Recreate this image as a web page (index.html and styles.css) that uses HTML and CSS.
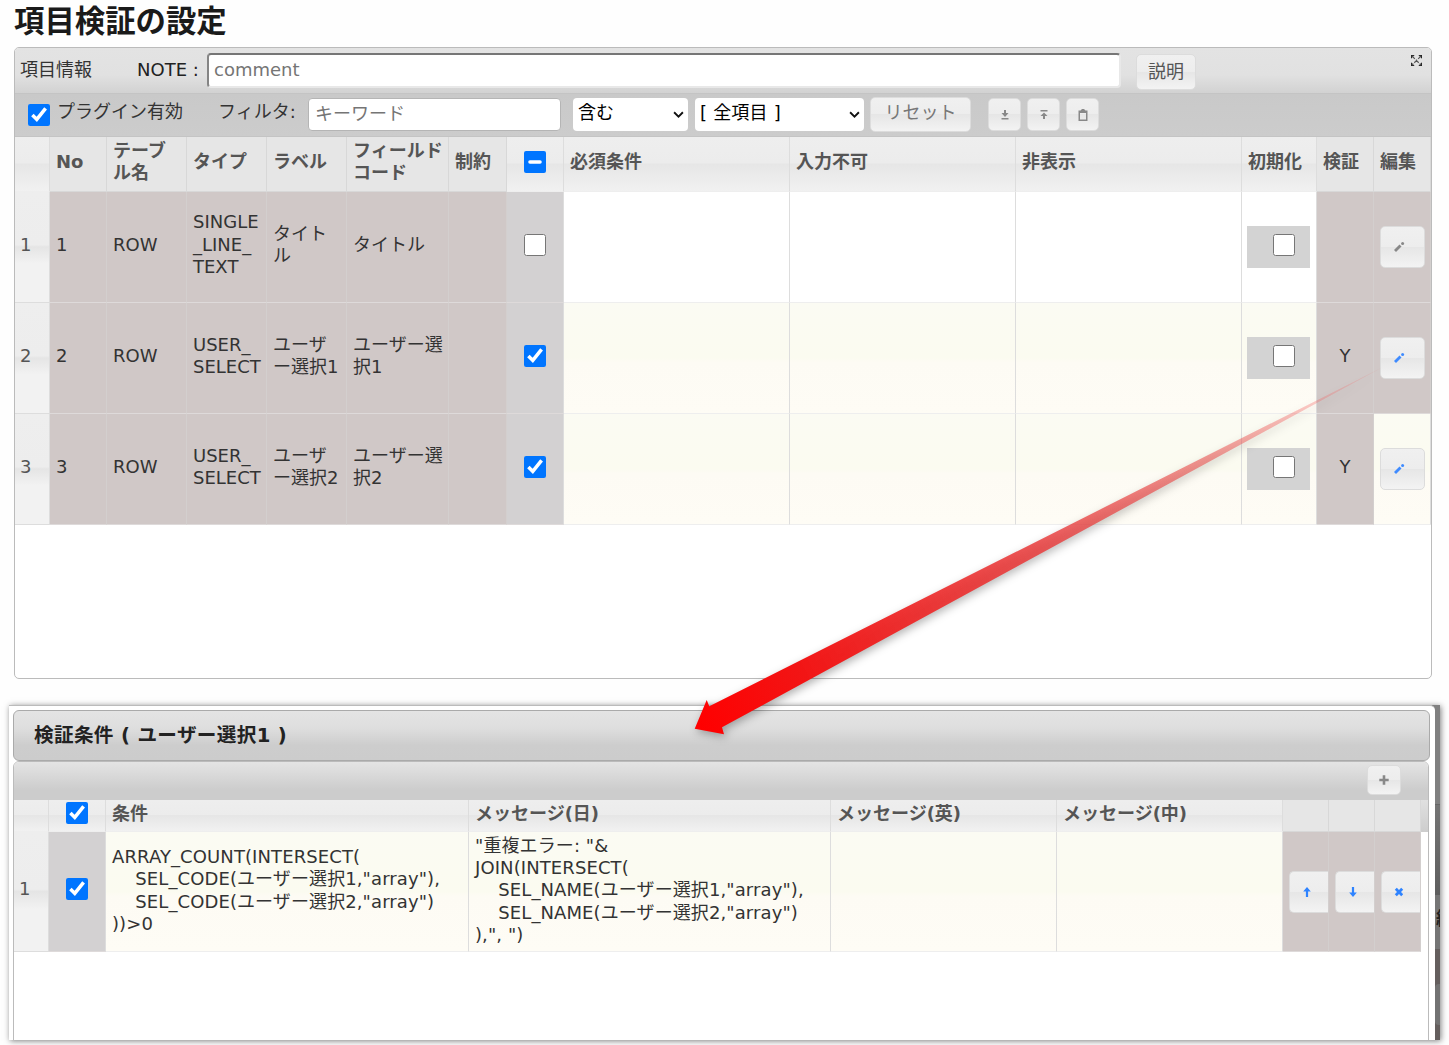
FILE: index.html
```html
<!DOCTYPE html>
<html lang="ja">

<head>
    <meta charset="UTF-8">
    <title>項目検証の設定</title>
    <link rel="stylesheet" href="styles.css">
</head>

<body>
    <h1>項目検証の設定</h1>

    <!-- Field list -->
    <section class="grid-panel">
        <div class="title-bar">
            <span class="title-label">項目情報</span>
            <label class="note-label" for="note">NOTE :</label>
            <input type="text" id="note" class="note-input" placeholder="comment">
            <button class="btn help-btn">説明</button>
            <svg class="expand-icon" viewBox="0 0 12 12">
                <path d="M0 0h4L0 4zM12 0v4L8 0zM0 12V8l4 4zM12 12H8l4-4z" />
                <path class="cross" d="M1 1l10 10M11 1L1 11" />
            </svg>
        </div>
        <div class="toolbar">
            <input type="checkbox" id="enabled" checked>
            <label class="enabled-label" for="enabled">プラグイン有効</label>
            <label class="filter-label" for="keyword">フィルタ:</label>
            <input type="text" id="keyword" class="keyword-input" placeholder="キーワード">
            <div class="select select-cond">含む<svg viewBox="0 0 10 7"><path d="M1 1l4 4 4-4" /></svg></div>
            <div class="select select-field">[ 全項目 ]<svg viewBox="0 0 10 7"><path d="M1 1l4 4 4-4" /></svg></div>
            <button class="btn reset-btn">リセット</button>
            <button class="btn tool-btn"><svg viewBox="0 0 10 12"><path d="M4 1h2v3h2.500L5 8 1.500 4H4zM1.500 9h7v1.500h-7z" /></svg></button>
            <button class="btn tool-btn"><svg viewBox="0 0 10 12"><path d="M1.500 1h7v1.500h-7zM5 3.500l3.500 3.500H6v3H4V7H1.500z" /></svg></button>
            <button class="btn tool-btn"><svg viewBox="0 0 10 12"><path fill-rule="evenodd" d="M2.500 1.500L4 0h2l1.500 1.500h2V12h-9V1.500zM2 4v6.500h6V4z" /></svg></button>
        </div>
        <table class="fields">
            <colgroup>
                <col style="width: 35px"><col style="width: 57px"><col style="width: 80px"><col style="width: 80px">
                <col style="width: 80px"><col style="width: 102px"><col style="width: 58px"><col style="width: 57px">
                <col style="width: 226px"><col style="width: 226px"><col style="width: 226px"><col style="width: 75px">
                <col style="width: 57px"><col style="width: 57px">
            </colgroup>
            <thead>
                <tr>
                    <th></th>
                    <th class="fixed">No</th>
                    <th class="fixed">テーブ<br>ル名</th>
                    <th class="fixed">タイプ</th>
                    <th class="fixed">ラベル</th>
                    <th class="fixed">フィールド<br>コード</th>
                    <th class="fixed">制約</th>
                    <th class="check"><input type="checkbox" id="checkAll"></th>
                    <th>必須条件</th>
                    <th>入力不可</th>
                    <th>非表示</th>
                    <th>初期化</th>
                    <th class="fixed">検証</th>
                    <th class="fixed">編集</th>
                </tr>
            </thead>
            <tbody>
                <tr>
                    <td class="num">1</td>
                    <td class="ro">1</td>
                    <td class="ro">ROW</td>
                    <td class="ro">SINGLE<br>_LINE_<br>TEXT</td>
                    <td class="ro">タイト<br>ル</td>
                    <td class="ro">タイトル</td>
                    <td class="ro"></td>
                    <td class="check"><input type="checkbox"></td>
                    <td></td>
                    <td></td>
                    <td></td>
                    <td class="init"><div><input type="checkbox"></div></td>
                    <td class="ro center"></td>
                    <td class="ro edit"><button class="btn edit-btn"><svg viewBox="0 0 12 12"><path class="shaft" d="M2 10l5.500-5.500" /><path class="tip" d="M9.600 2.400h.01" /></svg></button></td>
                </tr>
                <tr class="active">
                    <td class="num">2</td>
                    <td class="ro">2</td>
                    <td class="ro">ROW</td>
                    <td class="ro">USER_<br>SELECT</td>
                    <td class="ro">ユーザ<br>ー選択1</td>
                    <td class="ro">ユーザー選<br>択1</td>
                    <td class="ro"></td>
                    <td class="check"><input type="checkbox" checked></td>
                    <td></td>
                    <td></td>
                    <td></td>
                    <td class="init"><div><input type="checkbox"></div></td>
                    <td class="ro center">Y</td>
                    <td class="ro edit"><button class="btn edit-btn"><svg viewBox="0 0 12 12"><path class="shaft" d="M2 10l5.500-5.500" /><path class="tip" d="M9.600 2.400h.01" /></svg></button></td>
                </tr>
                <tr class="active">
                    <td class="num">3</td>
                    <td class="ro">3</td>
                    <td class="ro">ROW</td>
                    <td class="ro">USER_<br>SELECT</td>
                    <td class="ro">ユーザ<br>ー選択2</td>
                    <td class="ro">ユーザー選<br>択2</td>
                    <td class="ro"></td>
                    <td class="check"><input type="checkbox" checked></td>
                    <td></td>
                    <td></td>
                    <td></td>
                    <td class="init"><div><input type="checkbox"></div></td>
                    <td class="ro center">Y</td>
                    <td class="edit"><button class="btn edit-btn"><svg viewBox="0 0 12 12"><path class="shaft" d="M2 10l5.500-5.500" /><path class="tip" d="M9.600 2.400h.01" /></svg></button></td>
                </tr>
            </tbody>
        </table>
    </section>

    <!-- Validation dialog -->
    <section class="dialog-wrap">
        <div class="dialog">
            <h2>検証条件 ( ユーザー選択1 )</h2>
            <div class="rules-panel">
                <div class="rules-toolbar">
                    <button class="btn add-btn"><svg viewBox="0 0 10 10"><path d="M3.700 .3h2.600v3.400h3.400v2.600H6.300v3.400H3.700V6.300H.3V3.700h3.400z" /></svg></button>
                </div>
                <div class="rules-body">
                    <table class="rules">
                        <colgroup>
                            <col style="width: 35px"><col style="width: 57px"><col style="width: 363px"><col style="width: 362px">
                            <col style="width: 226px"><col style="width: 226px"><col style="width: 46px"><col style="width: 46px">
                            <col style="width: 46px">
                        </colgroup>
                        <thead>
                            <tr>
                                <th></th>
                                <th class="check"><input type="checkbox" checked></th>
                                <th>条件</th>
                                <th>メッセージ(日)</th>
                                <th>メッセージ(英)</th>
                                <th>メッセージ(中)</th>
                                <th class="fixed"></th>
                                <th class="fixed"></th>
                                <th class="fixed"></th>
                            </tr>
                        </thead>
                        <tbody>
                            <tr class="active">
                                <td class="num">1</td>
                                <td class="check"><input type="checkbox" checked></td>
                                <td class="formula">ARRAY_COUNT(INTERSECT(
    SEL_CODE(ユーザー選択1,"array"),
    SEL_CODE(ユーザー選択2,"array")
))&gt;0</td>
                                <td class="formula">"重複エラー: "&amp;
JOIN(INTERSECT(
    SEL_NAME(ユーザー選択1,"array"),
    SEL_NAME(ユーザー選択2,"array")
),", ")</td>
                                <td></td>
                                <td></td>
                                <td class="ro op"><button class="btn op-btn"><svg viewBox="0 0 10 10"><path d="M5 0l3.800 4.500H6.100V10H3.900V4.500H1.200z" /></svg></button></td>
                                <td class="ro op"><button class="btn op-btn"><svg viewBox="0 0 10 10"><path d="M5 10L1.200 5.500h2.700V0h2.200v5.500h2.700z" /></svg></button></td>
                                <td class="ro op"><button class="btn op-btn"><svg viewBox="0 0 10 10"><path d="M.8 2.800L2.800 .8 5 3 7.200 .8l2 2L7 5l2.200 2.200-2 2L5 7 2.800 9.200l-2-2L3 5z" /></svg></button></td>
                            </tr>
                        </tbody>
                    </table>
                </div>
            </div>
        </div>
        <div class="backdrop">
            <div class="bd-top"></div>
            <div class="bd-bar"></div>
            <div class="bd-head">編</div>
            <div class="bd-cell"><i></i></div>
        </div>
    </section>

    <!-- Arrow from the edit button to the dialog -->
    <svg class="arrow" viewBox="0 0 1449 1045">
        <defs>
            <linearGradient id="fade" gradientUnits="userSpaceOnUse" x1="700" y1="726" x2="1383" y2="367">
                <stop offset="0" stop-color="#ff0000" />
                <stop offset="0.15" stop-color="#f21515" />
                <stop offset="0.5" stop-color="#e93c3c" stop-opacity="0.85" />
                <stop offset="0.75" stop-color="#ea4a48" stop-opacity="0.55" />
                <stop offset="1" stop-color="#ff5050" stop-opacity="0.1" />
            </linearGradient>
        </defs>
        <path fill="url(#fade)" d="M694.700 728.700L706.700 700l2.600 6.300L1383 367 722 727.300l2 7z" />
    </svg>

    <script>
        document.getElementById("checkAll").indeterminate = true;
    </script>
</body>

</html>
```
FILE: styles.css
```css
* {
    box-sizing: border-box;
}

body {
    width: 1449px;
    height: 1045px;
    margin: 0;
    padding: 0 0 0 14px;
    overflow: hidden;
    position: relative;
    background-color: #fefefe;
    color: #333;
    font-family: "DejaVu Sans", "Noto Sans CJK JP", sans-serif;
    font-size: 18px;
    line-height: 22.500px;
}

h1 {
    height: 47px;
    margin: 0;
    color: #1a1a1a;
    font-size: 30.400px;
    line-height: 43px;
}

input,
button {
    margin: 0;
    font: inherit;
}

input[type="checkbox"] {
    display: block;
    width: 22px;
    height: 22px;
    flex: none;
    accent-color: #0075ff;
}

input[type="text"] {
    border-radius: 4px;
    background-color: #fff;
    padding: 0 6px 3px;
}

::placeholder {
    color: #757575;
}

/* Buttons */
.btn {
    display: flex;
    align-items: center;
    justify-content: center;
    flex: none;
    padding: 0;
    border: 1px solid #dcdcdc;
    border-radius: 5px;
    background: linear-gradient(#f0f0f0, #ededed 50%, #e6e6e6 50%, #f3f3f3);
    color: #555;
}

.btn svg {
    fill: #888;
}

/* Field list */
.grid-panel {
    width: 1418px;
    height: 632px;
    border: 1px solid #bbb;
    border-radius: 5px;
    background-color: #fff;
    overflow: hidden;
}

.title-bar {
    display: flex;
    height: 46px;
    padding: 5px 9px 0 5px;
    background: linear-gradient(#e3e3e3, #e1e1e1 60%, #d2d2d2);
    border-bottom: 1px solid #c4c4c4;
}

.title-label {
    width: 117px;
    line-height: 34px;
}

.note-label {
    width: 70px;
    line-height: 34px;
    white-space: nowrap;
    color: #222;
}

.note-input {
    width: 914px;
    height: 35px;
    padding-left: 5px !important;
    border: 2px solid;
    border-color: #767676 #e8e8e8 #e8e8e8 #858585;
}

.help-btn {
    width: 60px;
    height: 36px;
    margin: 1px 0 0 15px;
}

.expand-icon {
    width: 11px;
    height: 11px;
    margin: 2px 0 0 auto;
    fill: #222;
}

.expand-icon .cross {
    stroke: #555;
    stroke-width: 1.300;
    stroke-dasharray: 4.500 1.500;
}

.toolbar {
    display: flex;
    align-items: center;
    height: 43px;
    padding: 0 0 1px 13px;
    background: linear-gradient(#c9c9c9, #ccc);
    border-bottom: 1px solid #c4c4c4;
}

.enabled-label {
    width: 161px;
    margin: -4px 0 0 7px;
}

.filter-label {
    width: 90px;
    margin-top: -4px;
}

.keyword-input {
    width: 253px;
    height: 33px;
    border: 1px solid #b5b5b5;
}

.select {
    display: flex;
    align-items: center;
    justify-content: space-between;
    height: 33px;
    padding: 0 4px 2px 5px;
    border-radius: 4px;
    background-color: #fff;
    color: #000;
}

.select svg {
    width: 11px;
    height: 8px;
    margin-top: 3px;
    fill: none;
    stroke: #111;
    stroke-width: 1.700;
}

.select-cond {
    width: 115px;
    margin-left: 12px;
}

.select-field {
    width: 169px;
    margin-left: 7px;
    letter-spacing: 0.2px;
}

.reset-btn {
    width: 101px;
    height: 35px;
    margin-left: 6px;
    padding-bottom: 2px;
    color: #777;
}

.tool-btn {
    width: 33px;
    height: 33px;
    margin-left: 6px;
}

.reset-btn + .tool-btn {
    margin-left: 17px;
}

.tool-btn svg {
    width: 10px;
    height: 12px;
}

/* Tables */
table {
    table-layout: fixed;
    border-collapse: separate;
    border-spacing: 0;
}

th,
td {
    padding: 0 0 4px 6px;
    border-right: 1px solid #ddd;
    border-bottom: 1px solid #eee;
    text-align: left;
    vertical-align: middle;
}

th {
    background: linear-gradient(#eee, #ececec 48%, #e6e6e6 50%, #f1f1f1);
    color: #555;
    line-height: 22px;
}

th.fixed {
    background: #e6e6e6;
    border-color: #d8d8d8;
}

.fields {
    width: 1416px;
}

.fields thead tr {
    height: 55px;
}

.fields tbody tr {
    height: 111px;
}

td.num {
    padding-left: 5px;
    background: linear-gradient(#eee, #ededed 48%, #e5e5e5 50%, #f2f2f2 65%);
    border-color: #ddd;
    color: #555;
}

.active td {
    background: linear-gradient(#fbfbf3, #fbfbf0 50%, #fdfbf4 54%, #fefcf5);
}

.active td.num {
    background: linear-gradient(#eee, #ededed 48%, #e5e5e5 50%, #f2f2f2 65%);
}

tbody td.ro {
    background: #d0c8c7;
    border-right-color: #d3cfce;
    border-bottom-color: #dedada;
}

th.check,
td.check {
    padding: 0 0 5px;
}

tbody td.check {
    background: #d3d1d2;
    border-bottom-color: #dedada;
}

.check input {
    margin: 0 auto;
}

td.center {
    padding: 0 0 4px;
    text-align: center;
}

td.init {
    padding: 0 0 0 5px;
}

.init div {
    width: 63px;
    height: 42px;
    padding: 8px 0 0 26px;
    background-color: #d3d3d3;
}

td.edit {
    padding: 0 0 0 6px;
}

.edit-btn {
    width: 45px;
    height: 42px;
    padding-right: 7px;
}

.edit-btn svg {
    width: 12px;
    height: 12px;
    stroke: #888;
}

.shaft {
    stroke-width: 2.800;
}

.tip {
    stroke-width: 3;
    stroke-linecap: round;
}

.active .edit-btn svg {
    stroke: #3f8bff;
}

.active .op-btn svg {
    fill: #2e83ff;
}

/* Validation dialog */
.dialog-wrap {
    display: flex;
    width: 1431px;
    height: 335px;
    margin: 26px 0 0 -5px;
    background-color: #808080;
    box-shadow: 1px 1px 6px rgba(0, 0, 0, 0.5);
}

.dialog {
    width: 1426px;
    padding: 4px 5px 0 4px;
    border-top: 1px solid #bbb;
    border-top-right-radius: 5px;
    background-color: #fff;
    overflow: hidden;
}

h2 {
    height: 51px;
    margin: 0;
    padding-left: 20px;
    border: 1px solid #aaa;
    border-radius: 6px;
    background: linear-gradient(#e4e4e4, #dedede 35%, #cdcdcd 70%, #ccc);
    color: #222;
    font-size: 19.600px;
    letter-spacing: 0.35px;
    line-height: 49px;
}

.rules-panel {
    width: 1416px;
    height: 290px;
    border: 1px solid #bbb;
    border-radius: 6px 6px 0 0;
    overflow: hidden;
}

.rules-toolbar {
    display: flex;
    justify-content: flex-end;
    height: 38px;
    padding: 3px 27px 0 0;
    background: linear-gradient(#e4e4e4, #ccc 75%, #ccc);
}

.add-btn {
    width: 34px;
    height: 30px;
}

.add-btn svg {
    width: 10px;
    height: 10px;
}

.rules-body {
    background: linear-gradient(#e0e0e0, #cdcdcd) no-repeat 0 0 / 100% 32px;
}

.rules {
    width: 1407px;
    background-color: #fff;
}

.rules thead tr {
    height: 32px;
}

.rules tbody tr {
    height: 120px;
}

.formula {
    padding-bottom: 2px;
    letter-spacing: 0.1px;
    line-height: 22.300px;
    white-space: pre;
}

td.op {
    padding: 0 0 0 6px;
}

.op-btn {
    width: 39px;
    height: 42px;
    padding-right: 4px;
    border-right: none;
    border-radius: 5px 0 0 5px;
}

.op-btn svg {
    width: 10px;
    height: 10px;
}

/* Dimmed page edge behind the dialog */
.backdrop {
    flex: 1;
    overflow: hidden;
}

.bd-top {
    height: 100px;
    background-color: #808080;
    border-bottom: 1px solid #666;
}

.bd-bar {
    height: 90px;
    background: linear-gradient(#747474, #5e5e5e);
}

.bd-head {
    height: 54px;
    background-color: #757575;
    color: #222;
    font-weight: bold;
    line-height: 48px;
    text-indent: 1px;
    white-space: nowrap;
}

.bd-cell {
    height: 91px;
    padding-top: 35px;
    background-color: #645e5d;
}

.bd-cell i {
    display: block;
    height: 41px;
    border-radius: 4px 0 0 4px;
    background-color: #727272;
}

.arrow {
    position: absolute;
    top: 0;
    left: 0;
    width: 1449px;
    height: 1045px;
    pointer-events: none;
    filter: drop-shadow(2px 3px 4px rgba(0, 0, 0, 0.3));
}
```
